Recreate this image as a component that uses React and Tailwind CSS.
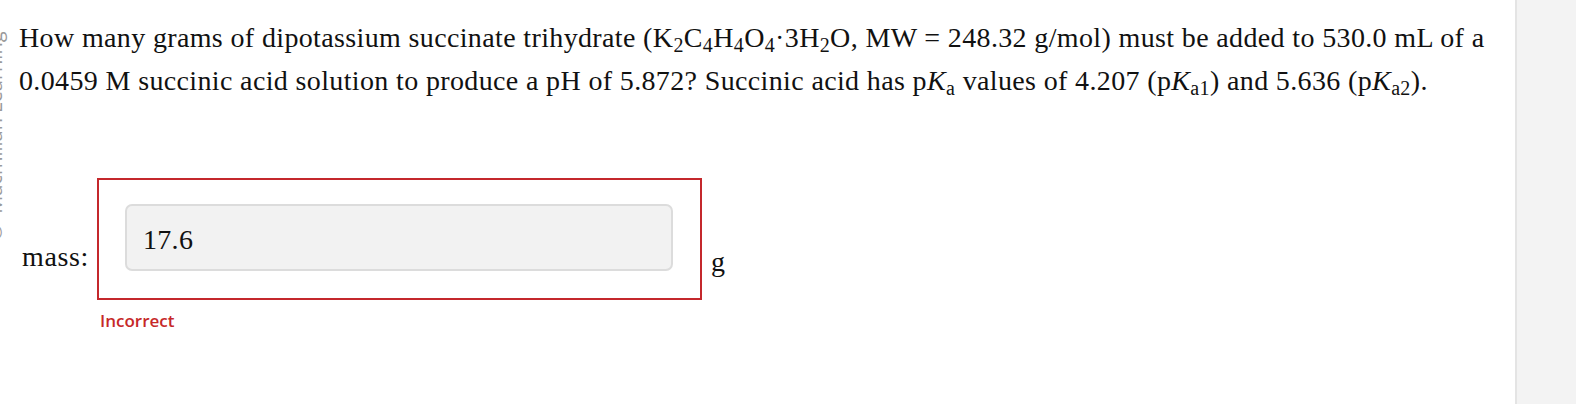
import React from "react";

function Sub({ children }) {
  return <span className="text-[20px] leading-none align-[-5px]">{children}</span>;
}

export default function App() {
  return (
    <div className="relative w-[1576px] h-[404px] overflow-hidden bg-white flex text-[#111]">
      <div
        className="absolute -left-[14px] top-[36px] h-[210px] [writing-mode:vertical-rl] rotate-180 text-[20px] leading-[18px] text-[#9a9a9a] whitespace-nowrap"
        style={{ fontFamily: '"Open Sans", sans-serif' }}
      >
        © Macmillan Learning
      </div>
      <div
        className="flex-1 pl-[19px] pt-[16px]"
        style={{ fontFamily: '"Liberation Serif", "Times New Roman", serif' }}
      >
        <p className="text-[28px] leading-[43px] tracking-[0.36px] whitespace-nowrap">
          How many grams of dipotassium succinate trihydrate (K<Sub>2</Sub>C<Sub>4</Sub>H<Sub>4</Sub>O<Sub>4</Sub>·3H<Sub>2</Sub>O, MW = 248.32 g/mol) must be added to 530.0 mL of a
          <br />
          0.0459 M succinic acid solution to produce a pH of 5.872? Succinic acid has p<i>K</i><Sub>a</Sub> values of 4.207 (p<i>K</i><Sub>a1</Sub>) and 5.636 (p<i>K</i><Sub>a2</Sub>).
        </p>
        <div className="mt-[76px] flex items-start">
          <div className="pl-[3px] mt-[63px] w-[78px] text-[28px] leading-[31px] tracking-[0.6px]">mass:</div>
          <div className="flex flex-col">
            <div className="w-[605px] h-[122px] border-2 border-[#c4282c] pt-[24px] pl-[26px]">
              <div className="w-[548px] h-[67px] rounded-[7px] border-2 border-[#dcdcdc] bg-[#f2f2f2] flex items-center pl-[16px] pt-[4px] text-[28px] leading-[31px] tracking-[0.3px]">
                17.6
              </div>
            </div>
            <div
              className="mt-[10px] ml-[3px] text-[17px] leading-[22px] font-semibold text-[#c62828]"
              style={{ fontFamily: '"Open Sans", sans-serif' }}
            >
              Incorrect
            </div>
          </div>
          <div className="ml-[9px] mt-[68px] text-[28px] leading-[31px]">g</div>
        </div>
      </div>
      <div className="w-[61px] h-full bg-[#f3f3f3] border-l-2 border-[#e4e4e4]" />
    </div>
  );
}
